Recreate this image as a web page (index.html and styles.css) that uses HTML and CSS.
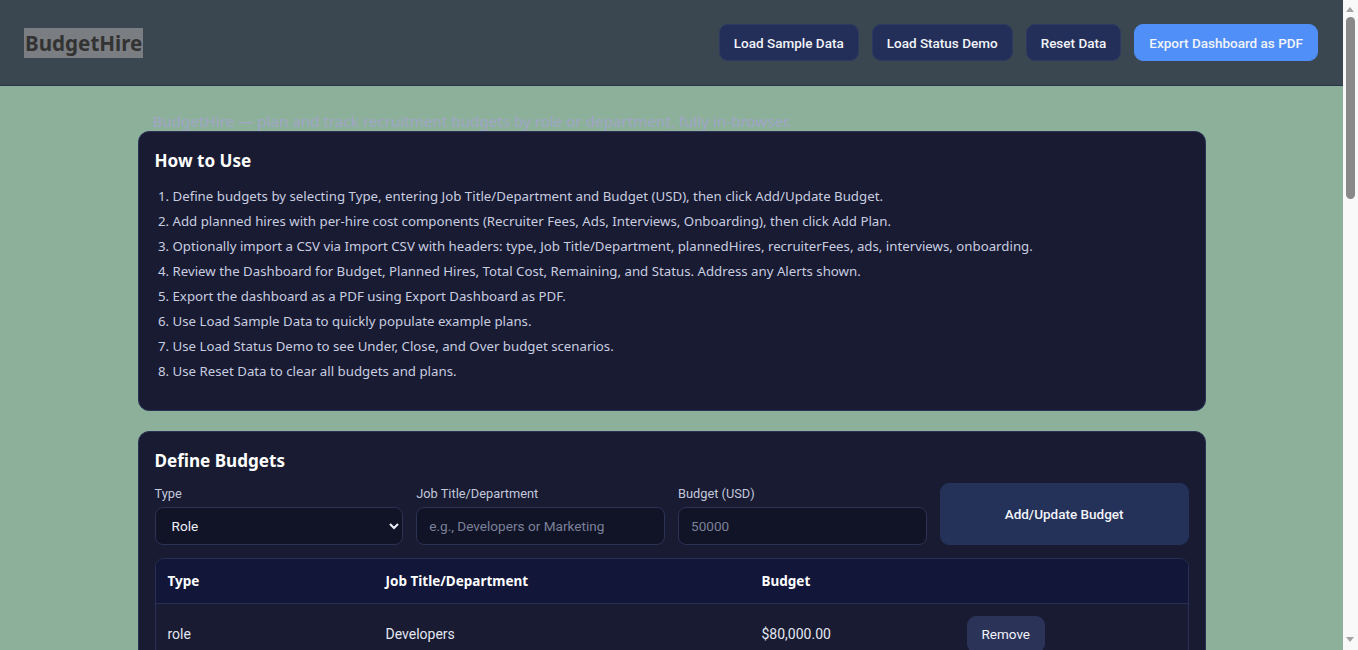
FILE: index.html
```html
<!DOCTYPE html>
<html lang="en">
<head>
<meta charset="utf-8">
<title>BudgetHire</title>
<link rel="stylesheet" href="styles.css">
</head>
<body>
<div class="page">
<header class="topbar">
  <h1 class="brand">BudgetHire</h1>
  <div class="actions">
    <button class="btn btn-dark">Load Sample Data</button>
    <button class="btn btn-dark">Load Status Demo</button>
    <button class="btn btn-dark">Reset Data</button>
    <button class="btn btn-primary">Export Dashboard as PDF</button>
  </div>
</header>
<main class="main">
  <p class="tagline">BudgetHire — plan and track recruitment budgets by role or department, fully in-browser.</p>
  <section class="card">
    <h2 class="card-title">How to Use</h2>
    <ol class="steps">
      <li>Define budgets by selecting Type, entering Job Title/Department and Budget (USD), then click Add/Update Budget.</li>
      <li>Add planned hires with per-hire cost components (Recruiter Fees, Ads, Interviews, Onboarding), then click Add Plan.</li>
      <li>Optionally import a CSV via Import CSV with headers: type, Job Title/Department, plannedHires, recruiterFees, ads, interviews, onboarding.</li>
      <li>Review the Dashboard for Budget, Planned Hires, Total Cost, Remaining, and Status. Address any Alerts shown.</li>
      <li>Export the dashboard as a PDF using Export Dashboard as PDF.</li>
      <li>Use Load Sample Data to quickly populate example plans.</li>
      <li>Use Load Status Demo to see Under, Close, and Over budget scenarios.</li>
      <li>Use Reset Data to clear all budgets and plans.</li>
    </ol>
  </section>
  <section class="card">
    <h2 class="card-title">Define Budgets</h2>
    <div class="form-grid">
      <label class="field">
        <span class="field-label">Type</span>
        <select class="control">
          <option>Role</option>
          <option>Department</option>
        </select>
      </label>
      <label class="field">
        <span class="field-label">Job Title/Department</span>
        <input class="control" type="text" placeholder="e.g., Developers or Marketing">
      </label>
      <label class="field">
        <span class="field-label">Budget (USD)</span>
        <input class="control" type="number" placeholder="50000">
      </label>
      <button class="btn btn-block">Add/Update Budget</button>
    </div>
    <div class="table-wrap">
      <table class="data-table">
        <thead>
          <tr><th class="col-type">Type</th><th class="col-name">Job Title/Department</th><th class="col-budget">Budget</th><th></th></tr>
        </thead>
        <tbody>
          <tr><td>role</td><td>Developers</td><td>$80,000.00</td><td><button class="btn btn-small">Remove</button></td></tr>
          <tr><td>department</td><td>Marketing</td><td>$40,000.00</td><td><button class="btn btn-small">Remove</button></td></tr>
        </tbody>
      </table>
    </div>
  </section>
</main>
</div>
<div class="scrollbar" aria-hidden="true">
  <span class="sb-up"></span>
  <span class="sb-thumb"></span>
  <span class="sb-down"></span>
</div>
</body>
</html>
```

FILE: styles.css
```css
* { box-sizing: border-box; }
body {
  margin: 0;
  background: #8db09b;
  font-family: "Noto Sans", "Open Sans", sans-serif;
  color: #c9cde0;
}
.page { margin-right: 15px; }
.topbar {
  height: 86px;
  background: #3a4751;
  border-bottom: 1px solid #2b3548;
  padding: 0 25px 0 24px;
  display: flex;
  align-items: center;
  justify-content: space-between;
}
.brand {
  margin: 0;
  font-size: 20.6px;
  font-weight: 700;
  color: #333;
  background: #7a7e82;
  line-height: 30px;
  padding: 0 1px;
}
.actions { display: flex; gap: 13px; }
.btn {
  border: 1px solid #2c3960;
  border-radius: 9px;
  font-family: "Roboto", "Liberation Sans", sans-serif;
  font-weight: 500;
  font-size: 13.5px;
  color: #f2f4fa;
  cursor: pointer;
}
.btn-dark { background: #232f58; height: 37px; padding: 0 14px; }
.btn-primary { background: #4f8ff7; border-color: #4f8ff7; height: 37px; padding: 0 14px; }
.main {
  max-width: 1068px;
  margin: 0 auto;
  padding-bottom: 40px;
}
.tagline {
  margin: 0 0 0 15px;
  padding-top: 24px;
  height: 45px;
  font-size: 15.2px;
  color: #a0a6c6;
  line-height: 22px;
}
.card {
  background: #181b31;
  border: 1px solid #2c3256;
  border-radius: 11px;
  padding: 17px 16px 16px;
  margin-bottom: 20px;
}
.card-title {
  margin: 0;
  font-size: 17.1px;
  line-height: 24px;
  font-weight: 700;
  color: #ffffff;
}
.steps {
  margin: 13px 0 12px;
  padding-left: 18px;
  font-size: 13.25px;
  line-height: 21px;
  color: #c9cde0;
}
.steps li { margin-bottom: 4px; }
.form-grid {
  margin-top: 10px;
  display: grid;
  grid-template-columns: repeat(4, 1fr);
  gap: 13px;
  align-items: end;
}
.field { display: flex; flex-direction: column; gap: 6px; }
.field-label {
  font-family: "Roboto", "Liberation Sans", sans-serif;
  font-size: 12.8px;
  line-height: 15px;
  color: #c3c8dc;
}
.control {
  height: 38px;
  background: #111427;
  border: 1px solid #2b3254;
  border-radius: 8px;
  color: #eef0f8;
  font-family: "Roboto", "Liberation Sans", sans-serif;
  font-size: 13.6px;
  padding: 0 12px;
}
.control::placeholder { color: #7b8098; }
select.control { padding: 0 10px 0 12px; }
.btn-block {
  height: 62px;
  background: #243158;
  border-color: #243158;
  padding: 0 12px;
}
.table-wrap {
  margin-top: 13px;
  border: 1px solid #2a3054;
  border-radius: 9px;
  overflow: hidden;
}
.data-table {
  width: 100%;
  border-collapse: collapse;
  font-size: 13.5px;
}
.data-table th {
  background: #121639;
  color: #ffffff;
  font-weight: 700;
  text-align: left;
  height: 44px;
  padding: 0 12px;
  border-bottom: 1px solid #2a3054;
}
.data-table td {
  padding: 12px 12px 12px;
  color: #e4e7f2;
  font-family: "Roboto", "Liberation Sans", sans-serif;
  font-size: 14px;
  border-bottom: 1px solid #252b4c;
}
.col-type { width: 218px; }
.col-name { width: 376px; }
.col-budget { width: 205px; }
.btn-small {
  background: #2b3359;
  border-color: #2b3359;
  height: 37px;
  padding: 0 14px;
  font-weight: 400;
}
.scrollbar {
  position: fixed;
  top: 0;
  right: 0;
  width: 15px;
  height: 100vh;
  background: #f9f9f9;
}
.sb-thumb {
  position: absolute;
  top: 17px;
  left: 3px;
  width: 9px;
  height: 182px;
  border-radius: 5px;
  background: #898989;
}
.sb-up, .sb-down {
  position: absolute;
  left: 3px;
  width: 0;
  height: 0;
  border-left: 4.5px solid transparent;
  border-right: 4.5px solid transparent;
}
.sb-up { top: 7px; border-bottom: 5px solid #a3a3a3; }
.sb-down { bottom: 8px; border-top: 5px solid #a3a3a3; }
```
